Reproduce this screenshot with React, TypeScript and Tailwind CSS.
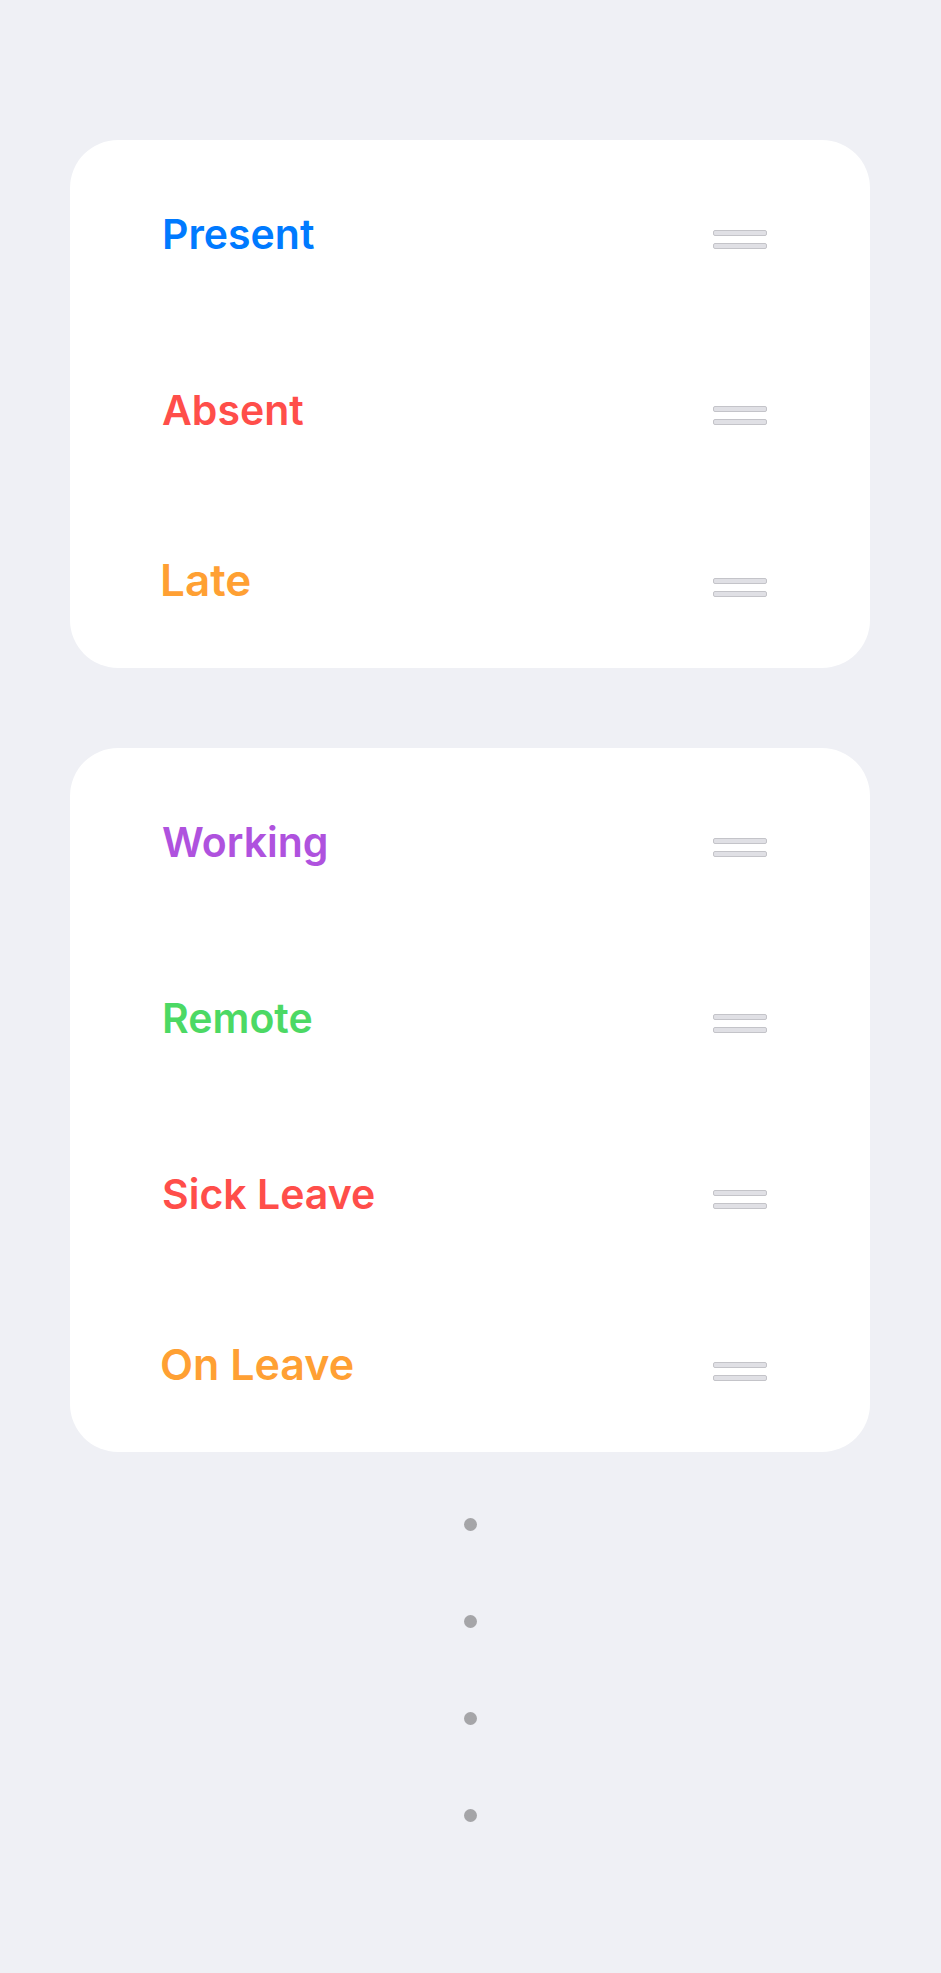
const groups = [
  [
    { label: 'Present', color: 'text-[#007AFF]' },
    { label: 'Absent', color: 'text-[#FF4E4A]' },
    { label: 'Late', color: 'text-[#FFA033]', size: 'text-[44px]' },
  ],
  [
    { label: 'Working', color: 'text-[#AF52DE]' },
    { label: 'Remote', color: 'text-[#4CD964]' },
    { label: 'Sick Leave', color: 'text-[#FF4E4A]' },
    { label: 'On Leave', color: 'text-[#FFA033]', size: 'text-[43px]' },
  ],
]

function DragHandle({ last }: { last: boolean }) {
  return (
    <div className={`flex flex-col gap-[7px] ${last ? 'mt-[14px]' : 'mt-[22px]'}`}>
      <span className="block h-[6px] w-[54px] rounded-[2px] border border-[#c4c4c9] bg-[#e0e0e5]" />
      <span className="block h-[6px] w-[54px] rounded-[2px] border border-[#c4c4c9] bg-[#e0e0e5]" />
    </div>
  )
}

export default function App() {
  return (
    <div
      className="min-h-[1973px] w-full bg-[#eff0f5] pt-[140px] px-[70px]"
      style={{ fontFamily: 'Inter, "Noto Sans", sans-serif' }}
    >
      <div className="flex flex-col gap-[80px]">
        {groups.map((rows, g) => (
          <div key={g} className="w-[800px] rounded-[48px] bg-white overflow-hidden">
            {rows.map((row, i) => {
              const last = i === rows.length - 1
              return (
                <div
                  key={row.label}
                  className={`h-[176px] flex items-center justify-between pr-[103px] ${last ? 'pl-[90px]' : 'pl-[92px]'}`}
                >
                  <span
                    className={`${last ? 'pt-0' : 'pt-3'} ${row.size ?? 'text-[41px]'} font-semibold leading-none ${row.color}`}
                  >
                    {row.label}
                  </span>
                  <DragHandle last={last} />
                </div>
              )
            })}
          </div>
        ))}
      </div>

      <div className="flex flex-col items-center gap-[84px] mt-[66px]">
        {[0, 1, 2, 3].map((i) => (
          <span key={i} className="block h-[13px] w-[13px] rounded-full bg-[#a5a5a8]" />
        ))}
      </div>
    </div>
  )
}
